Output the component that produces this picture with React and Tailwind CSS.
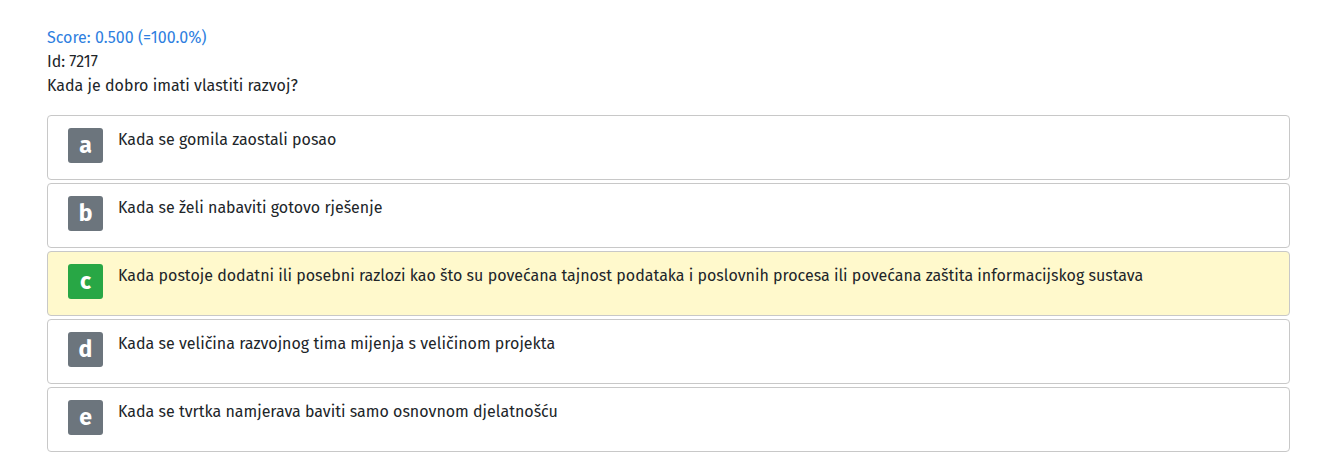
import React from 'react';

const answers = [
  { key: 'a', text: 'Kada se gomila zaostali posao' },
  { key: 'b', text: 'Kada se želi nabaviti gotovo rješenje' },
  {
    key: 'c',
    text: 'Kada postoje dodatni ili posebni razlozi kao što su povećana tajnost podataka i poslovnih procesa ili povećana zaštita informacijskog sustava',
    correct: true,
  },
  { key: 'd', text: 'Kada se veličina razvojnog tima mijenja s veličinom projekta' },
  { key: 'e', text: 'Kada se tvrtka namjerava baviti samo osnovnom djelatnošću' },
];

const App = () => {
  return (
    <div
      className="min-h-screen bg-white pl-[47px] pr-[45px] pt-[26px] text-[16px] leading-[24px] text-[#212529]"
      style={{ fontFamily: '"Fira Sans", "Open Sans", sans-serif' }}
    >
      {/* Header */}
      <div className="text-[#2f7fe0]">Score: 0.500 (=100.0%)</div>
      <div>Id: 7217</div>
      <div>Kada je dobro imati vlastiti razvoj?</div>

      {/* Answers */}
      <div className="mt-[17px] flex flex-col gap-[3px]">
        {answers.map((a) => (
          <div
            key={a.key}
            className={`flex h-[65px] items-start gap-[15px] rounded-[4px] border border-[#c8c8c8] pl-[20px] pt-[12px] ${
              a.correct ? 'bg-[#fff9cc]' : 'bg-white'
            }`}
          >
            <div
              className={`flex h-[35px] w-[35px] shrink-0 items-center justify-center rounded-[3px] text-[23px] font-bold leading-none text-white ${
                a.correct ? 'bg-[#28a745]' : 'bg-[#6c757d]'
              }`}
            >
              {a.key}
            </div>
            <div>{a.text}</div>
          </div>
        ))}
      </div>
    </div>
  );
};

export default App;
